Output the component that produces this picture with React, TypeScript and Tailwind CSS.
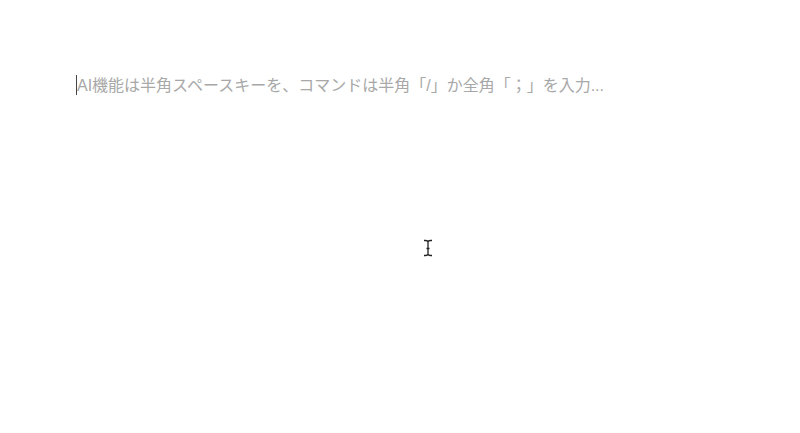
const PLACEHOLDER = 'AI機能は半角スペースキーを、コマンドは半角「/」か全角「；」を入力...';

const TextCursor = () => (
  <svg aria-hidden="true" focusable="false" width="10" height="18" viewBox="0 0 10 18" fill="none" className="absolute left-[423px] top-[239px]">
    <path d="M1 1.5H2.5Q5 1.7 5 3V15Q5 16.3 2.5 16.5H1M9 1.5H7.5Q5 1.7 5 3M9 16.5H7.5Q5 16.3 5 15M3.5 9.5H6.5" stroke="#222222" strokeWidth="1.3" />
  </svg>
);

export default function App() {
  return (
    <main className="relative min-h-screen bg-white px-19 pt-[75px]">
      <div className="flex h-5 items-center border-l border-[#444444]">
        <input
          type="text"
          aria-label="本文"
          placeholder={PLACEHOLDER}
          className="w-full bg-transparent pt-px font-['Liberation_Sans','Noto_Sans_CJK_JP',sans-serif] text-[16px] leading-6 text-[#37352f] outline-none placeholder:text-[#a8a8a8]"
        />
      </div>
      {/* Mouse pointer resting over the empty page */}
      <TextCursor />
    </main>
  );
}
